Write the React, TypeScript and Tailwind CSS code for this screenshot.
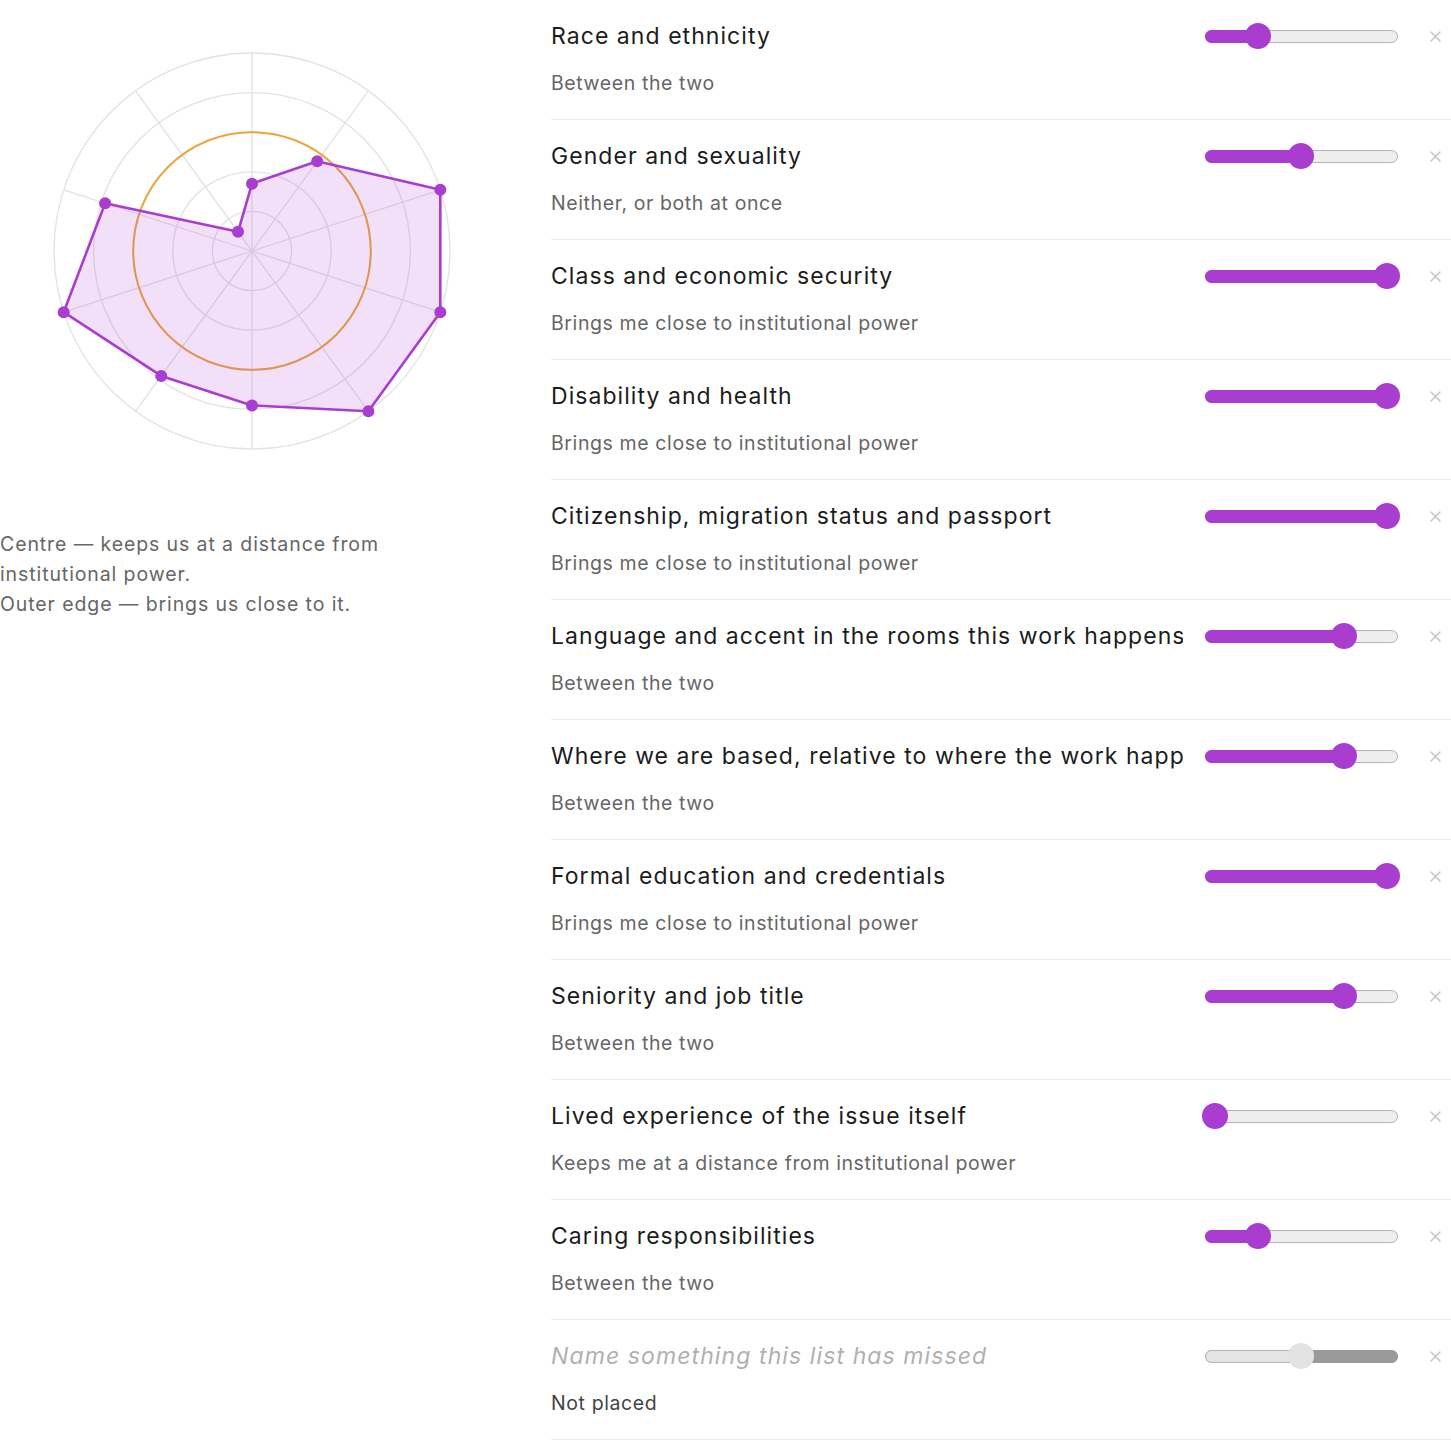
import React from 'react';

type Factor = {
  label: string;
  value: number | null; // 0..1 in quarter steps, null when not placed
};

const factors: Factor[] = [
  { label: 'Race and ethnicity', value: 0.25 },
  { label: 'Gender and sexuality', value: 0.5 },
  { label: 'Class and economic security', value: 1 },
  { label: 'Disability and health', value: 1 },
  { label: 'Citizenship, migration status and passport', value: 1 },
  { label: 'Language and accent in the rooms this work happens', value: 0.75 },
  { label: 'Where we are based, relative to where the work happens', value: 0.75 },
  { label: 'Formal education and credentials', value: 1 },
  { label: 'Seniority and job title', value: 0.75 },
  { label: 'Lived experience of the issue itself', value: 0 },
  { label: 'Caring responsibilities', value: 0.25 },
];

const describe = (v: number) => {
  if (v >= 1) return 'Brings me close to institutional power';
  if (v <= 0) return 'Keeps me at a distance from institutional power';
  if (v === 0.5) return 'Neither, or both at once';
  return 'Between the two';
};

const PURPLE = '#a83dd0';

// radar chart: 10 spokes, rings every fifth of the radius
function Radar() {
  const cx = 252;
  const cy = 251;
  const R = 198;
  const spokes = 10;
  const values = factors.slice(0, spokes).map((f) => f.value ?? 0);
  const pts = values.map((v, i) => {
    const a = (i / spokes) * Math.PI * 2;
    const r = R * (0.12 + 0.88 * v);
    return [cx + Math.sin(a) * r, cy - Math.cos(a) * r];
  });
  const poly = pts.map((p) => p.join(',')).join(' ');

  return (
    <svg width="504" height="504" viewBox="0 0 504 504" className="block">
      {[0.2, 0.4, 0.6, 0.8, 1].map((k) => (
        <circle key={k} cx={cx} cy={cy} r={R * k} fill="none" stroke="#e2e2e2" strokeWidth="1.3" />
      ))}
      {Array.from({ length: spokes }).map((_, i) => {
        const a = (i / spokes) * Math.PI * 2;
        return (
          <line
            key={i}
            x1={cx}
            y1={cy}
            x2={cx + Math.sin(a) * R}
            y2={cy - Math.cos(a) * R}
            stroke="#e2e2e2"
            strokeWidth="1.3"
          />
        );
      })}
      <circle cx={cx} cy={cy} r={R * 0.6} fill="none" stroke="#eea53c" strokeWidth="2" />
      <polygon points={poly} fill="rgba(168,61,208,0.16)" stroke={PURPLE} strokeWidth="2.6" strokeLinejoin="round" />
      {pts.map((p, i) => (
        <circle key={i} cx={p[0]} cy={p[1]} r="6" fill={PURPLE} />
      ))}
    </svg>
  );
}

function Slider({ value }: { value: number | null }) {
  const placed = value !== null;
  const pos = 10 + (value ?? 0.5) * 172;
  return (
    <div className="relative ml-[22px] h-[13px] w-[193px] shrink-0 rounded-full border border-[#b3b3b3] bg-[#eeeeee]">
      {placed ? (
        <div
          className="absolute -left-px -top-px -bottom-px rounded-full bg-[#a83dd0]"
          style={{ width: pos + 1 }}
        />
      ) : (
        <>
          <div
            className="absolute -left-px -top-px -bottom-px rounded-l-full border border-[#b3b3b3] bg-[#e4e4e4]"
            style={{ width: pos + 1 }}
          />
          <div
            className="absolute -right-px -top-px -bottom-px rounded-r-full bg-[#9a9a9a]"
            style={{ left: pos }}
          />
        </>
      )}
      <div
        className={
          'absolute top-1/2 h-[26px] w-[26px] -translate-x-1/2 -translate-y-1/2 rounded-full ' +
          (placed ? 'bg-[#a83dd0]' : 'bg-[#e3e3e3]')
        }
        style={{ left: pos - 1 }}
      />
    </div>
  );
}

function CloseMark() {
  return (
    <svg width="11" height="11" viewBox="0 0 11 11" className="ml-[32px] mr-[10px] shrink-0">
      <path d="M1 1L10 10M10 1L1 10" stroke="#c6c6c6" strokeWidth="1.6" strokeLinecap="round" />
    </svg>
  );
}

function Row({ title, sub, value, placeholder }: { title: string; sub: string; value: number | null; placeholder?: boolean }) {
  return (
    <div className="border-b border-[#ececec] pt-5 pb-[22px]">
      <div className="flex h-8 items-center">
        <div
          className={
            'min-w-0 flex-1 overflow-hidden whitespace-nowrap text-[23px] leading-8 ' +
            (placeholder ? 'italic tracking-[1.1px] text-[#b0b0b0]' : 'tracking-[1.05px] text-[#1c1c1c]')
          }
        >
          {title}
        </div>
        <Slider value={value} />
        <CloseMark />
      </div>
      <div
        className={
          'mt-[17px] text-[19.5px] leading-7 tracking-[0.6px] ' + (placeholder ? 'text-[#444]' : 'text-[#666]')
        }
      >
        {sub}
      </div>
    </div>
  );
}

export default function App() {
  return (
    <div className="flex h-[1440px] overflow-hidden bg-white font-['Inter',sans-serif]">
      <div className="w-[504px] shrink-0">
        <Radar />
        <p className="mt-[25px] text-[19.5px] leading-[30px] tracking-[0.9px] text-[#666]">
          Centre — keeps us at a distance from
          <br />
          institutional power.
          <br />
          Outer edge — brings us close to it.
        </p>
      </div>
      <div className="ml-[47px] min-w-0 flex-1">
        {factors.map((f) => (
          <Row key={f.label} title={f.label} sub={describe(f.value ?? 0)} value={f.value} />
        ))}
        <Row title="Name something this list has missed" sub="Not placed" value={null} placeholder />
      </div>
    </div>
  );
}
